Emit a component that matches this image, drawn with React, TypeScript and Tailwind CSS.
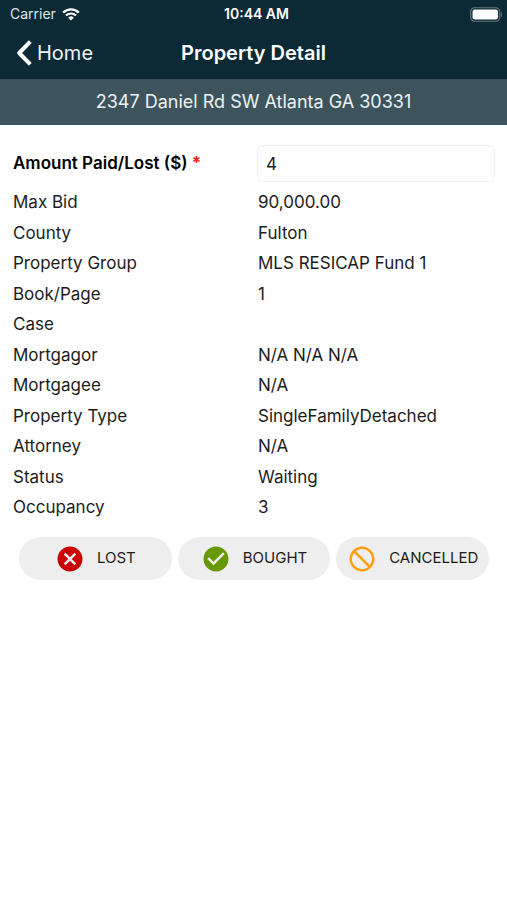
import React, { useState } from "react";
import { MdBlock, MdCancel, MdCheckCircle } from "react-icons/md";

type DetailRowProps = {
  label: string;
  value: string;
};

const details: DetailRowProps[] = [
  { label: "Max Bid", value: "90,000.00" },
  { label: "County", value: "Fulton" },
  { label: "Property Group", value: "MLS RESICAP Fund 1" },
  { label: "Book/Page", value: "1" },
  { label: "Case", value: "" },
  { label: "Mortgagor", value: "N/A N/A N/A" },
  { label: "Mortgagee", value: "N/A" },
  { label: "Property Type", value: "SingleFamilyDetached" },
  { label: "Attorney", value: "N/A" },
  { label: "Status", value: "Waiting" },
  { label: "Occupancy", value: "3" },
];

const StatusBar: React.FC = () => (
  <div className="grid grid-cols-[1fr_auto_1fr] items-center h-7 pl-2.5 pr-1">
    <div className="flex items-center gap-1.5 text-[#dfe6e9]">
      <span className="text-sm">Carrier</span>
      <svg viewBox="0 0 18 13" className="w-[18px] h-[13px]" fill="none" stroke="white" aria-hidden="true">
        <path d="M1.2 4.6a11 11 0 0 1 15.6 0" strokeWidth="2.2" />
        <path d="M4 7.6a7 7 0 0 1 10 0" strokeWidth="2.2" />
        <path d="M9 12.4 6.2 9.7a4 4 0 0 1 5.6 0z" fill="white" stroke="none" />
      </svg>
    </div>
    <span className="text-center text-sm font-semibold">10:44 AM</span>
    <svg viewBox="0 0 33 15" className="justify-self-end w-[33px] h-[15px]" fill="none" aria-hidden="true">
      <rect x="0.75" y="0.75" width="29" height="13.5" rx="4" stroke="#66797f" strokeWidth="1.2" />
      <rect x="2.5" y="2.5" width="25.5" height="10" rx="2.2" fill="white" />
      <path d="M31 5c1.4.6 1.4 4.4 0 5z" fill="#66797f" />
    </svg>
  </div>
);

const NavBar: React.FC = () => (
  <nav className="grid grid-cols-[1fr_auto_1fr] items-center h-[51px] px-4 pb-0.5">
    <a href="#home" className="flex items-center gap-[5px] text-xl text-[#eef3f5]">
      <svg viewBox="0 0 16 26" className="w-4 h-[26px]" fill="none" stroke="white" strokeWidth="4" aria-hidden="true">
        <path d="M14.3 1.6 3.2 13l11.1 11.4" strokeLinejoin="round" />
      </svg>
      Home
    </a>
    <h1 className="text-xl font-semibold">Property Detail</h1>
  </nav>
);

const DetailRow: React.FC<DetailRowProps> = ({ label, value }) => (
  <div className="grid grid-cols-2 gap-1.5 items-center odd:h-[30px] even:h-[31px]">
    <dt>{label}</dt>
    <dd className="pl-px">{value}</dd>
  </div>
);

type ActionButtonProps = {
  label: string;
  icon: React.ReactNode;
};

const ActionButton: React.FC<ActionButtonProps> = ({ label, icon }) => (
  <button
    type="button"
    className="flex flex-1 items-center justify-center gap-3 h-[43px] rounded-full bg-[#eeeeee] text-[15px]"
  >
    {icon}
    {label}
  </button>
);

const App: React.FC = () => {
  const [amount, setAmount] = useState("4");

  return (
    <div className="min-h-screen bg-white text-[#1c1c1c] font-['Inter',sans-serif]">
      <header className="bg-[#0b2a36] text-white">
        <StatusBar />
        <NavBar />
        <p className="flex items-center justify-center h-[46px] bg-[#3d545d] text-lg text-[#edf2f4]">
          2347 Daniel Rd SW Atlanta GA 30331
        </p>
      </header>

      <main className="pt-5">
        <div className="pl-[13px] pr-3 text-[17px]">
          {/* Amount */}
          <div className="grid grid-cols-2 gap-1.5 items-center mb-1.5">
            <label htmlFor="amount" className="font-semibold text-black">
              Amount Paid/Lost ($) <span className="font-bold text-[#ff2020]">*</span>
            </label>
            <input
              id="amount"
              type="text"
              inputMode="decimal"
              required
              value={amount}
              onChange={(e) => setAmount(e.target.value)}
              className="w-full h-[37px] px-2 rounded-md border border-[#eeeeee]"
            />
          </div>

          {/* Property details */}
          <dl>
            {details.map((row) => (
              <DetailRow key={row.label} {...row} />
            ))}
          </dl>
        </div>

        {/* Actions */}
        <div className="flex gap-1.5 mt-3.5 pl-[19px] pr-[18px]">
          <ActionButton label="LOST" icon={<MdCancel className="size-[30px] text-[#cc0000]" />} />
          <ActionButton label="BOUGHT" icon={<MdCheckCircle className="size-[30px] text-[#669900]" />} />
          <ActionButton label="CANCELLED" icon={<MdBlock className="size-[30px] -scale-x-100 text-[#ff9f0a]" />} />
        </div>
      </main>
    </div>
  );
};

export default App;
